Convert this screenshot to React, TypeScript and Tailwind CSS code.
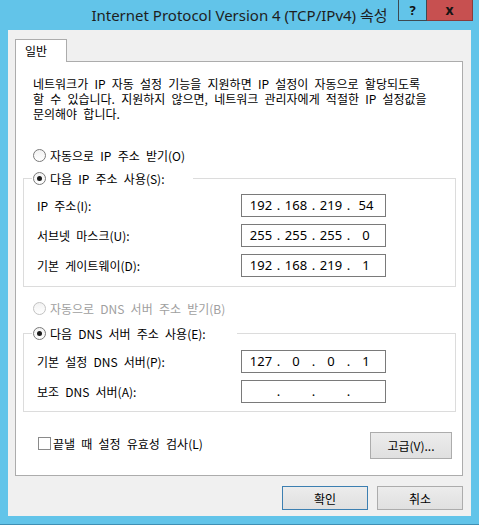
import React from "react";

const KR = "font-['Noto_Sans_CJK_KR','Noto_Sans',sans-serif]";

function RadioDot({ checked, disabled }: { checked?: boolean; disabled?: boolean }) {
  return (
    <span
      className={`flex h-[13px] w-[13px] shrink-0 items-center justify-center rounded-full border bg-gradient-to-b from-[#f2f2f2] to-white ${
        disabled ? "border-[#c2c2c2]" : "border-[#7a7a7a]"
      }`}
    >
      {checked && <span className="h-[5px] w-[5px] rounded-full bg-[#1c1c1c]" />}
    </span>
  );
}

function Radio({ label, checked, disabled }: { label: string; checked?: boolean; disabled?: boolean }) {
  return (
    <div className={`flex h-[16px] items-center gap-[4px] ${disabled ? "text-[#a0a0a0]" : "text-black"}`}>
      <RadioDot checked={checked} disabled={disabled} />
      <span className="whitespace-nowrap">{label}</span>
    </div>
  );
}

function IpBox({ parts }: { parts: string[] }) {
  return (
    <div className="flex h-[23px] w-[145px] items-center border border-[#7a7a7a] bg-white pl-[5px] font-['Noto_Sans',sans-serif] text-[13px] leading-none text-black">
      {parts.map((p, i) => (
        <React.Fragment key={i}>
          {i > 0 && <span className="w-[7px] text-center">.</span>}
          <span className="w-[28px] text-center">{p}</span>
        </React.Fragment>
      ))}
    </div>
  );
}

function Field({ label, parts }: { label: string; parts: string[] }) {
  return (
    <div className="flex h-[23px] items-center pl-[5px]">
      <span className="w-[204px] whitespace-nowrap">{label}</span>
      <IpBox parts={parts} />
    </div>
  );
}

function WinButton({ children, primary, className = "" }: { children: React.ReactNode; primary?: boolean; className?: string }) {
  return (
    <button
      className={`flex items-center justify-center border bg-gradient-to-b from-[#ececec] to-[#e0e0e0] text-[12px] text-black ${
        primary ? "border-[#3c7fb1]" : "border-[#acacac]"
      } ${className}`}
    >
      {children}
    </button>
  );
}

export default function App() {
  return (
    <div
      className={`h-[525px] w-[479px] border-b border-[#3f8fb4] bg-[#62c4e9] ${KR} text-[12px] leading-[15px] [word-spacing:3.5px]`}
    >
      {/* title bar */}
      <div className="relative flex h-[30px] items-center justify-center">
        <span className="pt-[1px] font-['Noto_Sans','Noto_Sans_CJK_KR',sans-serif] text-[15px] leading-none text-[#1e1e1e] [word-spacing:normal]">
          Internet Protocol Version 4 (TCP/IPv4) 속성
        </span>
        <div className="absolute right-[6px] top-0 flex h-[21px]">
          <div className="flex w-[29px] items-center justify-center border-x border-b border-[#3d4a52] bg-[#62c4e9] font-['Noto_Sans',sans-serif] text-[13px] font-bold text-[#101010]">
            ?
          </div>
          <div className="flex w-[46px] items-center justify-center border-b border-r border-[#8a3b3b] bg-[#c75050] font-['Noto_Sans',sans-serif] text-[14px] font-bold leading-none text-[#151515]">
            x
          </div>
        </div>
      </div>

      {/* client area */}
      <div className="ml-[8px] h-[486px] w-[463px] bg-[#f0f0f0] pt-[9px]">
        <div className="ml-[7px] flex">
          <div className="relative z-10 h-[23px] w-[52px] border-x border-t border-[#acacac] bg-white pl-[9px] pt-[3px] text-[12px] leading-[16px]">
            일반
          </div>
        </div>
        <div className="ml-[7px] mt-[-1px] h-[415px] w-[448px] border border-[#acacac] bg-white pt-[14px]">
          <p className="ml-[17px] whitespace-nowrap">
            네트워크가 IP 자동 설정 기능을 지원하면 IP 설정이 자동으로 할당되도록
            <br />
            할 수 있습니다. 지원하지 않으면, 네트워크 관리자에게 적절한 IP 설정값을
            <br />
            문의해야 합니다.
          </p>

          <div className="ml-[17px] mt-[26px]">
            <Radio label="자동으로 IP 주소 받기(O)" />
          </div>

          <fieldset className="ml-[7px] mt-[7px] w-[433px] border border-[#dcdcdc] pb-[9px] pl-[8px] pt-[8px]">
            <legend className="w-[161px] pl-[1px]">
              <Radio label="다음 IP 주소 사용(S):" checked />
            </legend>
            <div className="flex flex-col gap-[7px]">
              <Field label="IP 주소(I):" parts={["192", "168", "219", "54"]} />
              <Field label="서브넷 마스크(U):" parts={["255", "255", "255", "0"]} />
              <Field label="기본 게이트웨이(D):" parts={["192", "168", "219", "1"]} />
            </div>
          </fieldset>

          <div className="ml-[17px] mt-[13px]">
            <Radio label="자동으로 DNS 서버 주소 받기(B)" disabled />
          </div>

          <fieldset className="ml-[7px] mt-[9px] w-[433px] border border-[#dcdcdc] pb-[8px] pl-[8px] pt-[9px]">
            <legend className="w-[205px] pl-[1px]">
              <Radio label="다음 DNS 서버 주소 사용(E):" checked />
            </legend>
            <div className="flex flex-col gap-[7px]">
              <Field label="기본 설정 DNS 서버(P):" parts={["127", "0", "0", "1"]} />
              <Field label="보조 DNS 서버(A):" parts={["", "", "", ""]} />
            </div>
          </fieldset>

          <div className="mt-[20px] flex items-start justify-between pl-[22px] pr-[10px]">
            <div className="mt-[4px] flex h-[15px] items-center gap-[2px]">
              <span className="h-[13px] w-[13px] border border-[#8a8a8a] bg-white" />
              <span className="whitespace-nowrap">끝낼 때 설정 유효성 검사(L)</span>
            </div>
            <WinButton className="h-[27px] w-[82px]">고급(V)...</WinButton>
          </div>
        </div>

        <div className="mt-[10px] flex justify-end gap-[9px] pr-[8px]">
          <WinButton primary className="h-[24px] w-[86px]">
            확인
          </WinButton>
          <WinButton className="h-[24px] w-[86px]">취소</WinButton>
        </div>
      </div>
    </div>
  );
}
